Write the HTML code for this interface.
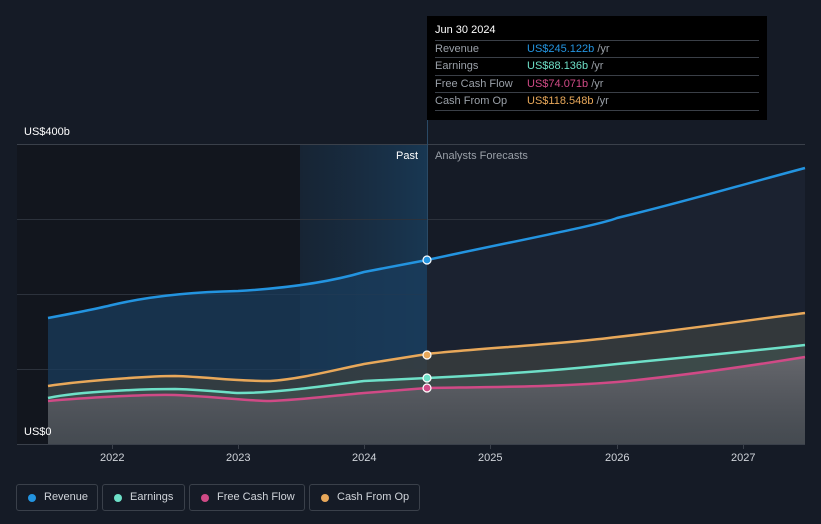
<!DOCTYPE html>
<html><head><meta charset="utf-8"><style>
body{margin:0;width:821px;height:524px;background:#151b26;font-family:"Liberation Sans",sans-serif;overflow:hidden;position:relative}
.t{position:absolute;font-size:11px;color:#fff;white-space:nowrap}
.tip{position:absolute;left:427px;top:16px;width:340px;height:104px;background:#000}
.tip .h{position:absolute;left:8px;top:8px;font-size:11px;color:#fff}
.row{position:absolute;left:8px;width:324px;border-top:1px solid #3a3f47;height:17px;font-size:11px;color:#9aa0a8;line-height:17px;white-space:nowrap}
.row span{position:absolute;left:92px}
.row i{font-style:normal;color:#9aa0a8}
.leg{position:absolute;top:484px;height:27px;border:1px solid #3a404a;border-radius:3px;box-sizing:border-box;font-size:11px;color:#d0d4da;line-height:25px;padding-left:27px;white-space:nowrap}
.leg b{position:absolute;left:11px;top:9px;width:8px;height:8px;border-radius:50%}
</style></head><body>
<svg width="821" height="524" style="position:absolute;left:0;top:0">
<defs>
<linearGradient id="hl" x1="0" x2="1"><stop offset="0" stop-color="#1b3a55" stop-opacity="0.3"/><stop offset="1" stop-color="#1b4a70" stop-opacity="0.6"/></linearGradient>
<linearGradient id="gr" x1="0" y1="0" x2="0" y2="1"><stop offset="0" stop-color="#6a6a70" stop-opacity="0.9"/><stop offset="1" stop-color="#4a4a55" stop-opacity="0.6"/></linearGradient>
</defs>
<rect x="17" y="145" width="283" height="299" fill="#12161e"/>
<rect x="300" y="145" width="127" height="299" fill="url(#hl)"/>
<g stroke="#2c323c" stroke-width="1">
<line x1="17" y1="144.5" x2="805" y2="144.5" stroke="#3a404a"/>
<line x1="17" y1="219.5" x2="805" y2="219.5"/>
<line x1="17" y1="294.5" x2="805" y2="294.5"/>
<line x1="17" y1="369.5" x2="805" y2="369.5"/>
<line x1="17" y1="444.5" x2="805" y2="444.5" stroke="#3a404a"/>
</g>
<line x1="427.5" y1="120" x2="427.5" y2="444" stroke="#2a4a66"/>
<path d="M48,318 C80,312 100,308 112,305 C150,296 190,292 238,291 C290,288 330,282 364,272 L427,260 L427,444 L48,444Z" fill="#1a3c5c" fill-opacity="0.75"/>
<path d="M427,260 C520,240 600,225 617,218 C680,203 730,188 805,168 L805,444 L427,444Z" fill="#1b2230"/>
<path d="M48,386 C80,381 150,376 175,376 C210,377 230,381 270,381 C300,379 330,371 364,364 L427,354 C480,348 554,345 617,337 C680,330 743,321 805,313 L805,444 L48,444Z" fill="#3a3f3e" fill-opacity="0.8"/>
<path d="M48,398 C80,391 150,389 175,389 C210,390 230,393 238,393 C280,393 330,385 364,381 L427,378 C490,375 554,371 617,364 C680,358 743,352 805,345 L805,444 L48,444Z" fill="#3f4f4e" fill-opacity="0.8"/>
<path d="M48,401 C80,398 150,394 175,395 C220,397 250,401 270,401 C300,400 330,396 364,393 L427,388 C490,387 554,387 617,382 C680,376 743,367 805,357 L805,444 L48,444Z" fill="url(#gr)"/>
<g fill="none" stroke-width="2.5">
<path d="M48,318 C80,312 100,308 112,305 C150,296 190,292 238,291 C290,288 330,282 364,272 L427,260 C520,240 600,225 617,218 C680,203 730,188 805,168" stroke="#2394e0"/>
<path d="M48,386 C80,381 150,376 175,376 C210,377 230,381 270,381 C300,379 330,371 364,364 L427,354 C480,348 554,345 617,337 C680,330 743,321 805,313" stroke="#e8a85a"/>
<path d="M48,398 C80,391 150,389 175,389 C210,390 230,393 238,393 C280,393 330,385 364,381 L427,378 C490,375 554,371 617,364 C680,358 743,352 805,345" stroke="#6ee0c8"/>
<path d="M48,401 C80,398 150,394 175,395 C220,397 250,401 270,401 C300,400 330,396 364,393 L427,388 C490,387 554,387 617,382 C680,376 743,367 805,357" stroke="#d04a86"/>
</g>
<g stroke="#fff" stroke-width="1.2">
<circle cx="427" cy="260" r="4" fill="#2394e0"/>
<circle cx="427" cy="355" r="4" fill="#e8a85a"/>
<circle cx="427" cy="378" r="4" fill="#6ee0c8"/>
<circle cx="427" cy="388" r="4" fill="#d04a86"/>
</g>
<g stroke="#3a404a"><line x1="112.5" y1="444" x2="112.5" y2="449"/><line x1="238.5" y1="444" x2="238.5" y2="449"/><line x1="364.5" y1="444" x2="364.5" y2="449"/><line x1="490.5" y1="444" x2="490.5" y2="449"/><line x1="617.5" y1="444" x2="617.5" y2="449"/><line x1="743.5" y1="444" x2="743.5" y2="449"/></g>
</svg>
<div class="t" style="left:24px;top:126px">US$400b</div>
<div class="t" style="left:24px;top:426px">US$0</div>
<div class="t" style="left:396px;top:150px">Past</div>
<div class="t" style="left:435px;top:150px;color:#9aa0a8">Analysts Forecasts</div>
<div class="t" style="left:100px;top:452px;color:#d0d4da">2022</div>
<div class="t" style="left:226px;top:452px;color:#d0d4da">2023</div>
<div class="t" style="left:352px;top:452px;color:#d0d4da">2024</div>
<div class="t" style="left:478px;top:452px;color:#d0d4da">2025</div>
<div class="t" style="left:605px;top:452px;color:#d0d4da">2026</div>
<div class="t" style="left:731px;top:452px;color:#d0d4da">2027</div>
<div class="tip">
<div class="h">Jun 30 2024</div>
<div class="row" style="top:24px">Revenue<span><b style="font-weight:normal;color:#2394e0">US$245.122b</b> <i>/yr</i></span></div>
<div class="row" style="top:41px">Earnings<span><b style="font-weight:normal;color:#6ee0c8">US$88.136b</b> <i>/yr</i></span></div>
<div class="row" style="top:59px">Free Cash Flow<span><b style="font-weight:normal;color:#d04a86">US$74.071b</b> <i>/yr</i></span></div>
<div class="row" style="top:76px;height:17px;border-bottom:1px solid #3a3f47">Cash From Op<span><b style="font-weight:normal;color:#e8a85a">US$118.548b</b> <i>/yr</i></span></div>
</div>
<div class="leg" style="left:16px;width:82px"><b style="background:#2394e0"></b>Revenue</div>
<div class="leg" style="left:102px;width:83px"><b style="background:#6ee0c8"></b>Earnings</div>
<div class="leg" style="left:189px;width:116px"><b style="background:#d04a86"></b>Free Cash Flow</div>
<div class="leg" style="left:309px;width:111px"><b style="background:#e8a85a"></b>Cash From Op</div>
</body></html>
